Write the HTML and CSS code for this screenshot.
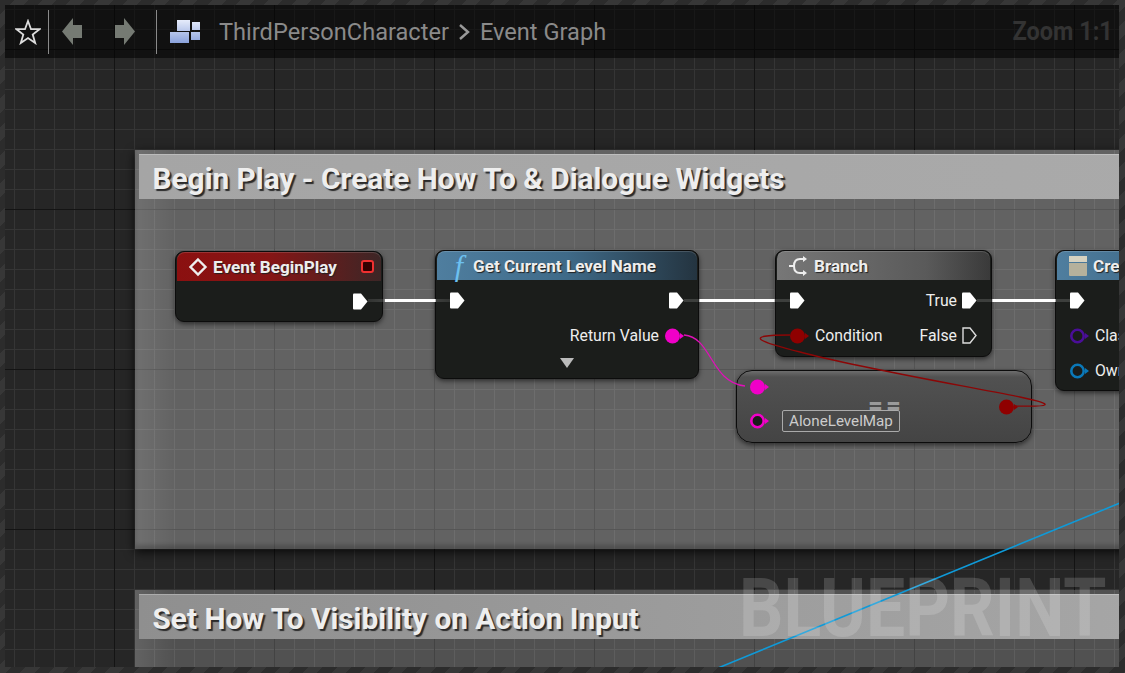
FILE: index.html
```html
<!DOCTYPE html>
<html>
	<head>
		<meta charset="utf-8">
		<title>Event Graph</title>
		<link rel="stylesheet" href="styles.css">
	</head>
	<body>
		<svg class="defs" width="0" height="0">
			<symbol id="exec" viewBox="0 0 15 17">
				<path d="M1 0.5H8L14.5 8.5L8 16.5H1Q0 16.5 0 15.5V1.5Q0 0.5 1 0.5Z" fill="#fff"/>
			</symbol>
			<symbol id="exec-open" viewBox="0 0 15 17">
				<path d="M1 1H8L14 8.5L8 16H1V1Z" fill="none" stroke="#ddd" stroke-width="1.4"/>
			</symbol>
			<symbol id="data" viewBox="0 0 20 16">
				<circle cx="7.5" cy="8" r="7.5" fill="currentColor"/>
				<path d="M15 5L19 8L15 11Z" fill="currentColor"/>
			</symbol>
			<symbol id="data-open" viewBox="0 0 20 16">
				<circle cx="7.5" cy="8" r="6.2" fill="#1a1c1a" stroke="currentColor" stroke-width="2.6"/>
				<path d="M15 5L19 8L15 11Z" fill="currentColor"/>
			</symbol>
			<linearGradient id="icon-blue" x1="0" y1="0" x2="0" y2="1">
				<stop offset="0" stop-color="#e6ecfb"/>
				<stop offset="1" stop-color="#8aa2dc"/>
			</linearGradient>
		</svg>
		<div class="graph">
			<div class="comment comment-first">
				<div class="comment-title">Begin Play - Create How To &amp; Dialogue Widgets</div>
			</div>
			<div class="comment comment-second">
				<div class="comment-title">Set How To Visibility on Action Input</div>
			</div>

			<div class="node node-event">
				<div class="node-head head-red">
					<svg class="head-icon" width="20" height="20" viewBox="0 0 20 20"><path d="M10 2.5L17.5 10L10 17.5L2.5 10Z" fill="none" stroke="#eee" stroke-width="2.4"/></svg>
					<span class="node-name">Event BeginPlay</span>
					<span class="delegate"></span>
				</div>
				<div class="node-body">
					<div class="row">
						<span></span>
						<svg class="pin-exec"><use href="#exec"/></svg>
					</div>
				</div>
			</div>

			<div class="node node-level">
				<div class="node-head head-blue">
					<span class="func">f</span>
					<span class="node-name">Get Current Level Name</span>
				</div>
				<div class="node-body">
					<div class="row">
						<svg class="pin-exec"><use href="#exec"/></svg>
						<svg class="pin-exec"><use href="#exec"/></svg>
					</div>
					<div class="row row-end">
						<span class="pin-label">Return Value</span>
						<svg class="pin-data pink"><use href="#data"/></svg>
					</div>
					<div class="advanced"><span class="arrow-down"></span></div>
				</div>
			</div>

			<div class="node node-branch">
				<div class="node-head head-grey">
					<svg class="head-icon" width="18" height="20" viewBox="0 0 18 20"><path d="M15 3H11Q5 3 5 10T11 17H15M0 10H5" fill="none" stroke="#eee" stroke-width="2"/><path d="M14 0L18 3L14 6ZM14 14L18 17L14 20Z" fill="#eee"/></svg>
					<span class="node-name">Branch</span>
				</div>
				<div class="node-body">
					<div class="row">
						<svg class="pin-exec"><use href="#exec"/></svg>
						<span class="pin-group">
							<span class="pin-label">True</span>
							<svg class="pin-exec"><use href="#exec"/></svg>
						</span>
					</div>
					<div class="row">
						<span class="pin-group">
							<svg class="pin-data red"><use href="#data"/></svg>
							<span class="pin-label">Condition</span>
						</span>
						<span class="pin-group">
							<span class="pin-label">False</span>
							<svg class="pin-exec"><use href="#exec-open"/></svg>
						</span>
					</div>
				</div>
			</div>

			<div class="node node-create">
				<div class="node-head head-blue">
					<svg class="head-icon" width="20" height="20" viewBox="0 0 20 20"><path d="M1 0H19V6H1Z" fill="#d6d2c0"/><path d="M1 7H19V19Q19 20 18 20H2Q1 20 1 19Z" fill="#b5b19c"/></svg>
					<span class="node-name">Create</span>
				</div>
				<div class="node-body">
					<div class="row">
						<svg class="pin-exec"><use href="#exec"/></svg>
					</div>
					<div class="row">
						<span class="pin-group">
							<svg class="pin-data purple"><use href="#data-open"/></svg>
							<span class="pin-label">Class</span>
						</span>
					</div>
					<div class="row">
						<span class="pin-group">
							<svg class="pin-data blue"><use href="#data-open"/></svg>
							<span class="pin-label">Owner</span>
						</span>
					</div>
				</div>
			</div>

			<div class="node node-equal">
				<div class="equal-pins">
					<div class="equal-row">
						<svg class="pin-data pink"><use href="#data"/></svg>
					</div>
					<div class="equal-row">
						<svg class="pin-data pink"><use href="#data-open"/></svg>
						<span class="level-input">AloneLevelMap</span>
					</div>
				</div>
				<span class="equal-sign">==</span>
				<svg class="pin-data red"><use href="#data"/></svg>
			</div>

			<svg class="wires" width="1114" height="662" viewBox="5 5 1114 662">
				<defs>
					<linearGradient id="fade1" gradientUnits="userSpaceOnUse" x1="368" x2="450" y1="0" y2="0">
						<stop offset="0" stop-color="#fff" stop-opacity="0.1"/>
						<stop offset="0.2" stop-color="#fff" stop-opacity="0.15"/>
						<stop offset="0.21" stop-color="#fff"/>
						<stop offset="0.82" stop-color="#fff"/>
						<stop offset="0.83" stop-color="#fff" stop-opacity="0.15"/>
						<stop offset="1" stop-color="#fff" stop-opacity="0.1"/>
					</linearGradient>
					<linearGradient id="fade2" gradientUnits="userSpaceOnUse" x1="684" x2="790" y1="0" y2="0">
						<stop offset="0" stop-color="#fff" stop-opacity="0.15"/>
						<stop offset="0.14" stop-color="#fff" stop-opacity="0.15"/>
						<stop offset="0.15" stop-color="#fff"/>
						<stop offset="0.85" stop-color="#fff"/>
						<stop offset="0.86" stop-color="#fff" stop-opacity="0.15"/>
						<stop offset="1" stop-color="#fff" stop-opacity="0.15"/>
					</linearGradient>
					<linearGradient id="fade3" gradientUnits="userSpaceOnUse" x1="977" x2="1070" y1="0" y2="0">
						<stop offset="0" stop-color="#fff" stop-opacity="0.15"/>
						<stop offset="0.16" stop-color="#fff" stop-opacity="0.15"/>
						<stop offset="0.17" stop-color="#fff"/>
						<stop offset="0.84" stop-color="#fff"/>
						<stop offset="0.85" stop-color="#fff" stop-opacity="0.15"/>
						<stop offset="1" stop-color="#fff" stop-opacity="0.15"/>
					</linearGradient>
				</defs>
				<rect x="368" y="299" width="82" height="3" fill="url(#fade1)"/>
				<rect x="684" y="299" width="106" height="3" fill="url(#fade2)"/>
				<rect x="977" y="299" width="93" height="3" fill="url(#fade3)"/>
				<path d="M684 335C712 337 710 382 745 386" fill="none" stroke="#e010b8" stroke-width="1.3"/>
				<path d="M790 335C740 335 760 342 800 352C860 368 960 385 1020 397C1058 405 1050 407 1015 406" fill="none" stroke="#8c0606" stroke-width="1.3"/>
				<path d="M718 668L1120 503" fill="none" stroke="#0f9ad8" stroke-width="1.6"/>
			</svg>

			<div class="watermark">BLUEPRINT</div>

			<div class="toolbar">
				<svg class="star" width="26" height="26" viewBox="0 0 26 26"><path d="M13 2L16 10.2H24.5L17.7 15.5L20.2 24L13 19L5.8 24L8.3 15.5L1.5 10.2H10Z" fill="none" stroke="#ddd" stroke-width="1.8"/></svg>
				<span class="tool-sep"></span>
				<svg class="nav-arrow" width="24" height="30" viewBox="0 0 24 30"><path d="M12 1V8H21V21H12V28L1 14.5Z" fill="#757a73"/></svg>
				<svg class="nav-arrow" width="24" height="30" viewBox="0 0 24 30"><path d="M12 1V8H3V21H12V28L23 14.5Z" fill="#757a73"/></svg>
				<span class="tool-sep"></span>
				<svg class="graph-icon" width="32" height="24" viewBox="0 0 32 24"><path d="M8 0H21V11H8ZM23 2H31V10H23ZM1 12H20V23H1ZM22 12H31V20H22Z" fill="url(#icon-blue)"/></svg>
				<div class="crumbs">
					<span>ThirdPersonCharacter</span>
					<svg width="14" height="18" viewBox="0 0 14 18"><path d="M3 2L11 9L3 16" fill="none" stroke="#999" stroke-width="2.4"/></svg>
					<span>Event Graph</span>
				</div>
				<span class="zoom-label">Zoom 1:1</span>
			</div>
		</div>
	</body>
</html>
```

FILE: styles.css
```css
html,body{margin: 0; height: 100%;}
body{background: repeating-linear-gradient(135deg, #2c2c2c 0 10px, #373737 10px 20px); padding: 5px 6px 6px 5px; box-sizing: border-box; font-family: Roboto, "Liberation Sans", sans-serif;}
.defs{position: absolute;}

/* grid: minor 20px, major 160px */
.graph{position: relative; width: 1114px; height: 662px; overflow: hidden; background-color: #262626;
	background-image:
		linear-gradient(90deg, #141414 1px, transparent 1px),
		linear-gradient(#141414 1px, transparent 1px),
		linear-gradient(90deg, #353535 1px, transparent 1px),
		linear-gradient(#353535 1px, transparent 1px);
	background-size: 160px 160px, 160px 160px, 20px 20px, 20px 20px;
	background-position: 109px 0, 0 44px, 9px 0, 0 4px;}

.toolbar{position: absolute; left: 0; top: 0; right: 0; height: 53px; background: rgba(0,0,0,.55); display: flex; align-items: center; box-sizing: border-box;}
.star{margin: 0 -1px 0 10px;}
.tool-sep{width: 1px; height: 44px; background: #8a8a8a; margin: 0 8px;}
.nav-arrow{margin: 0 6px 0 4px;}
.nav-arrow + .nav-arrow{margin-left: 21px; margin-right: 12px;}
.graph-icon{margin-left: 4px;}
.crumbs{display: flex; align-items: center; gap: 8.5px; margin-left: 18px; color: #8a8a8a; font-size: 23.6px;}
.zoom-label{margin-left: auto; margin-right: 6px; color: #333; font-size: 25px; font-weight: 700; transform: scaleX(.94); transform-origin: right;}

.comment{position: absolute; left: 130px; width: 1100px; background: linear-gradient(90deg, rgba(255,255,255,.34), rgba(255,255,255,.28) 40px); box-sizing: border-box; padding: 4px;}
.comment-first{top: 145px; height: 399px; box-shadow: 0 3px 10px rgba(0,0,0,.8), inset 0 -4px 4px rgba(0,0,0,.2);}
.comment-second{top: 585px; height: 120px; background: linear-gradient(90deg, rgba(255,255,255,.28), rgba(255,255,255,.2) 40px);}
.comment-title{height: 45px; line-height: 50px; padding-left: 13.5px; color: #eee; font-size: 29.8px; font-weight: 700; text-shadow: 2px 2px 1px #2a2a2a; box-sizing: border-box; box-shadow: inset 0 1px 0 rgba(255,255,255,.25); white-space: nowrap;}
.comment-first .comment-title{background: linear-gradient(90deg, #a5a5a5, #aaa);}
.comment-second .comment-title{background: linear-gradient(90deg, #8f8f8f, #a8a8a8);}

.node{position: absolute; background: #1b1d1b; border-radius: 9px; border: 1px solid #0c0c0c; box-sizing: border-box; box-shadow: 0 2px 5px rgba(0,0,0,.55); color: #eee;}
.node-event{left: 170px; top: 246px; width: 208px; height: 71px;}
.node-level{left: 430px; top: 245px; width: 264px; height: 129px;}
.node-branch{left: 770px; top: 245px; width: 217px; height: 107px;}
.node-create{left: 1050px; top: 245px; width: 200px; height: 141px;}
.node-equal{left: 731px; top: 365px; width: 296px; height: 73px; border-radius: 16px; display: flex; align-items: center; justify-content: space-between; padding: 0 12px 0 13px; background: linear-gradient(#6d6d6d, #515151 6px, #444 100%); }

.node-head{height: 29px; border-radius: 8px 8px 0 0; display: flex; align-items: center; padding-left: 11px; box-sizing: border-box; margin: 0 1px; font-size: 17.1px; font-weight: 700; box-shadow: inset 0 1px 0 rgba(255,255,255,.15); white-space: nowrap;}
.head-red{background: linear-gradient(90deg, #8b1010, #861515 45%, #3c2626);}
.head-blue{background: linear-gradient(90deg, #4f7e9f, #3f6a88 50%, #243440);}
.head-grey{background: linear-gradient(90deg, #777, #5a5a5a 70%, #3a3a3a);}
.head-icon{margin-right: 5px;}
.node-branch .head-icon{margin-right: 7px; margin-left: 1px;}
.node-name{text-shadow: 1px 1px 1px #222;}
.delegate{width: 9px; height: 9px; border: 2.5px solid #f03030; border-radius: 3px; background: #300; margin-left: auto; margin-right: 7px;}
.func{width: 22px; color: #6cc0f0; font: italic 400 30px/29px "Liberation Serif", serif; text-align: center; margin-right: 3px;}

.node-body{padding: 3px 14px 0;}
.row{height: 35px; display: flex; align-items: center; justify-content: space-between;}
.row-end{justify-content: flex-end; gap: 6px; margin-right: -1px;}
.pin-group{display: flex; align-items: center; gap: 5px;}
.pin-label{font-size: 15.8px; color: #eee;}
.pin-exec{width: 15px; height: 17px; display: block;}
.pin-data{width: 20px; height: 16px; display: block; flex: none;}
.pink{color: #f000c8;}
.red{color: #8f0000;}
.purple{color: #4a0e98;}
.blue{color: #0a78b8;}
.advanced{display: flex; justify-content: center; padding-top: 5px;}
.arrow-down{width: 0; height: 0; border-left: 7px solid transparent; border-right: 7px solid transparent; border-top: 10px solid #bbb;}

.equal-pins{display: flex; flex-direction: column; padding-bottom: 5px;}
.equal-row{height: 34px; display: flex; align-items: center; gap: 12px; position: relative; z-index: 1;}
.level-input{border: 1.5px solid #aaa; border-radius: 2px; height: 22px; line-height: 20px; box-sizing: border-box; padding: 0 6px; font-size: 15.2px; color: #ccc;}
.equal-sign{position: absolute; left: 131px; top: 21px; color: #9a9a9a; font-size: 26px; font-weight: 700; line-height: 26px; letter-spacing: 3px;}

.wires{position: absolute; left: 0; top: 0; pointer-events: none;}
.watermark{position: absolute; left: 734px; top: 562px; font-size: 82px; line-height: 82px; font-weight: 700; color: rgba(255,255,255,.16); transform: scaleX(.85); transform-origin: left; white-space: nowrap;}
```
